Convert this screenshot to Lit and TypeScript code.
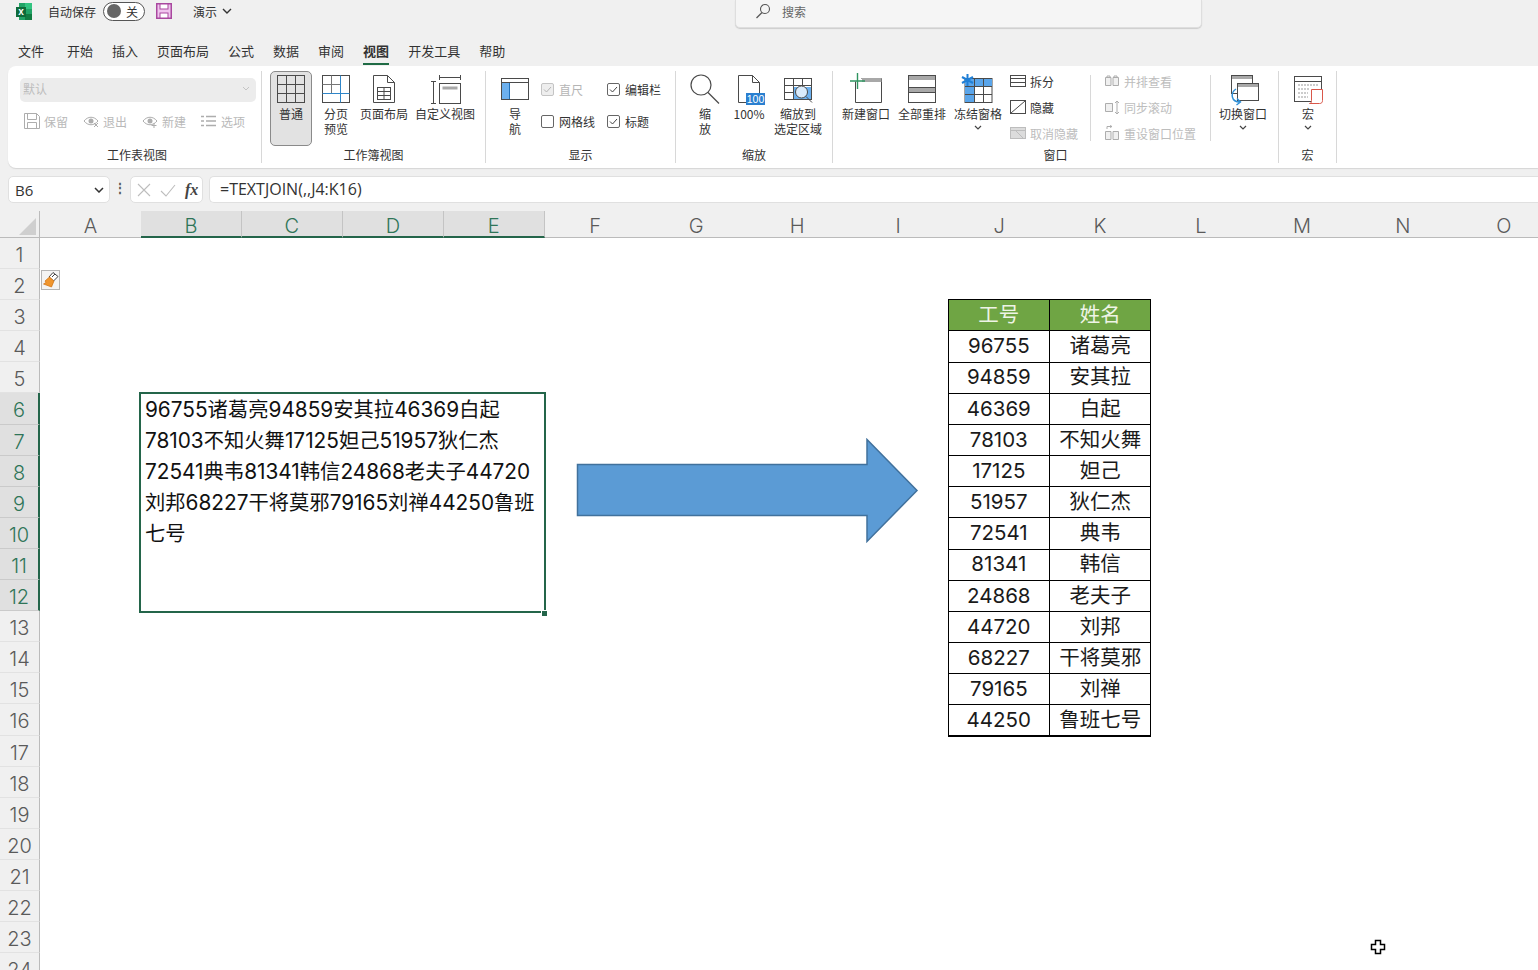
import { LitElement, html, css, svg } from "lit";
import { customElement } from "lit/decorators.js";

const S = "#4a4a4a";
const D = "#adadad";
const icons: Record<string, any> = {
  normal: svg`<g fill="none" stroke="${S}"><rect x="1.5" y="4.5" width="27" height="27"/><path d="M10.5 4.5v27M19.5 4.5v27M1.5 13.5h27M1.5 22.5h27"/></g>`,
  pagebreak: svg`<g fill="none"><rect x="1.5" y="4.5" width="27" height="27" stroke="${S}"/><path d="M10.5 4.5v18M1.5 13.5h18" stroke="#777"/><path d="M19.5 4.5v27M1.5 22.5h27" stroke="#2f86c9"/></g>`,
  pagelayout: svg`<g fill="none" stroke="${S}"><path d="M4.5 4.5h14l7 7v20h-21z"/><path d="M18.5 4.5v7h7"/><rect x="8.5" y="16.5" width="13" height="12"/><path d="M8.5 20.5h13M8.5 24.5h13M15 16.5v12"/></g>`,
  custom: svg`<g fill="none" stroke="${S}"><path d="M9.5 6.5h21M9.5 4v5M30.5 4v5M3.5 10.5v22M1 10.5h5M1 32.5h5"/><rect x="9.5" y="12.5" width="21" height="20"/><rect x="12.5" y="15.5" width="15" height="3" fill="#a8a8a8" stroke="none"/></g>`,
  nav: svg`<rect x="1.5" y="7.5" width="27" height="21" fill="#fff" stroke="${S}"/><rect x="2" y="12" width="7.5" height="16" fill="#6cb0ee"/><path d="M9.5 12v16" stroke="#1f6fb8"/><path d="M1.5 11.5h27" stroke="${S}"/>`,
  mag: svg`<circle cx="11" cy="14" r="10" fill="none" stroke="${S}" stroke-width="1.2"/><path d="M18 21.5l11 11" stroke="${S}" stroke-width="1.2"/>`,
  hundred: svg`<path d="M4.5 4.5h14l7 7v20h-21z M18.5 4.5v7h7" fill="none" stroke="${S}"/><rect x="12" y="22" width="19" height="12" fill="#2a7fd0"/><text x="21.5" y="32" text-anchor="middle" font-size="10.5" fill="#fff" font-family="Liberation Sans">100</text>`,
  zoomsel: svg`<g fill="none" stroke="${S}"><rect x="1.5" y="7.5" width="27" height="21" fill="#fff"/><rect x="10" y="16" width="18" height="12" fill="#6cb0ee" stroke="none"/><path d="M10.5 7.5v21M19.5 7.5v8M1.5 14.5h27M1.5 21.5h9"/><circle cx="18.5" cy="21" r="6" fill="#fff" fill-opacity=".75"/><path d="M23 25.5l6 6"/></g>`,
  newwin: svg`<g fill="none"><path d="M4.5 10.5v21h26v-24h-20" stroke="${S}"/><rect x="11" y="7" width="19.5" height="4" fill="#a8a8a8"/><path d="M6.5 2v16M-1 10h15" stroke="#2f9460" stroke-width="1.4"/></g>`,
  arrange: svg`<rect x="1.5" y="4.5" width="27" height="27" fill="none" stroke="${S}"/><rect x="2" y="5" width="26" height="4" fill="#a8a8a8"/><rect x="2" y="17" width="26" height="4" fill="#a8a8a8"/><path d="M1.5 16.5h27M1.5 21.5h27" stroke="${S}"/>`,
  freeze: svg`<rect x="2" y="7.5" width="27" height="24" fill="none" stroke="${S}"/><rect x="2" y="8" width="27" height="7" fill="#5aa5ea"/><rect x="2" y="15" width="9" height="16" fill="#5aa5ea"/><path d="M11.5 7.5v24M20.5 7.5v24M2 15.5h27M2 23.5h27" stroke="${S}"/><path d="M4.500 3v12M-1 6l11 6M-1 12l11-6" stroke="#1f7fd6" stroke-width="2"/>`,
  switch: svg`<g fill="none"><rect x="3.5" y="4.5" width="21" height="18" stroke="${S}" fill="#fff"/><rect x="4" y="5" width="20" height="3" fill="#a8a8a8"/><rect x="9.5" y="12.5" width="21" height="17" stroke="${S}" fill="#fff"/><rect x="10" y="13" width="20" height="3" fill="#a8a8a8"/><path d="M8 18c-6 4-5 13 4 13M9 27.500l3.500 3.500-4 3" stroke="#2f8fd6" stroke-width="1.4"/></g>`,
  macro: svg`<g fill="none"><rect x="1.500" y="5.500" width="27" height="25" stroke="${S}"/><path d="M1.500 10.500h27" stroke="${S}"/><path d="M5 14h20M5 18h12M5 22h10M5 26h10" stroke="#999" stroke-dasharray="2 1"/><path d="M18.500 18.500h11v11c0 2-1 3-3 3h-10c2 0 2-2 2-3z" fill="#fff" stroke="#d9574a"/></g>`,
};
const small: Record<string, any> = {
  save: svg`<path d="M.5.500h12l3 3v12H.5zM3.500.500v6h9v-6M3.500 15.500v-6h9v6" fill="none" stroke="${D}"/>`,
  eyex: svg`<path d="M1 8c4-5 10-5 14 0-4 5-10 5-14 0z" fill="none" stroke="${D}"/><circle cx="8" cy="8" r="2.500" fill="${D}"/><path d="M11 10l4 4M15 10l-4 4" stroke="${D}"/>`,
  eyep: svg`<path d="M1 8c4-5 10-5 14 0-4 5-10 5-14 0z" fill="none" stroke="${D}"/><circle cx="8" cy="8" r="2.500" fill="${D}"/><path d="M12 10v5M9.500 12.500h5" stroke="${D}"/>`,
  list: svg`<path d="M0 3.500h3M0 8h3M0 12.500h3M5 3.500h10M5 8h10M5 12.500h10" stroke="${D}" stroke-width="1.300" fill="none"/>`,
  split: svg`<rect x=".5" y="2.500" width="15" height="11" fill="none" stroke="${S}"/><path d="M.5 5.500h15M.5 9.500h15" stroke="${S}"/>`,
  hide: svg`<rect x=".5" y="1.500" width="15" height="13" fill="none" stroke="${S}"/><path d="M1 14L15 2" stroke="${S}"/>`,
  unhide: svg`<rect x=".5" y="2.500" width="15" height="11" fill="#dcdcdc" stroke="#bdbdbd"/><path d="M.5 5.500h15M6 6l7 7" stroke="#bdbdbd"/>`,
  side: svg`<path d="M1.500 4.500h5.500v8h-5.500zM9 4.500h5.500v8H9z" fill="#f0f0f0" stroke="${D}"/><path d="M3 4.500V3h3v1.500M10 4.500V3h3v1.500" stroke="${D}" fill="none"/>`,
  sync: svg`<path d="M1.500 4.500h7v8h-7zM8.500 4.500v8" fill="#f0f0f0" stroke="${D}"/><path d="M13 2v13M11 4l2-2 2 2M11 13l2 2 2-2" fill="none" stroke="${D}"/>`,
  reset: svg`<path d="M1.500 6.500h5.500v8h-5.500zM9 6.500h5.500v8H9z" fill="#f0f0f0" stroke="${D}"/><path d="M3 4V1.500h5M6 .5l2 1-2 1" stroke="${D}" fill="none"/>`,
};

const cols = "ABCDEFGHIJKLMNO".split("");
const rows = Array.from({ length: 24 }, (_, i) => i + 1);
const people = [
  ["96755", "诸葛亮"], ["94859", "安其拉"], ["46369", "白起"], ["78103", "不知火舞"], ["17125", "妲己"],
  ["51957", "狄仁杰"], ["72541", "典韦"], ["81341", "韩信"], ["24868", "老夫子"], ["44720", "刘邦"],
  ["68227", "干将莫邪"], ["79165", "刘禅"], ["44250", "鲁班七号"],
];
const chev = html`<svg class="chev" width="8" height="6" viewBox="0 0 8 6"><path d="M1 1l3 3 3-3" fill="none" stroke="#444" stroke-width="1.200"/></svg>`;

@customElement("app-root")
export class AppRoot extends LitElement {
  static styles = css`
    :host { display: block; width: 1538px; height: 970px; overflow: hidden; position: relative; background: #f0f0f0;
      font-family: "Noto Sans CJK SC", "Noto Sans", sans-serif; color: #333; font-size: 12px; }
    .title { height: 22px; display: flex; align-items: center; position: relative; }
    .logo { margin-left: 16px; }
    .autosave { margin-left: 16px; width: 48px; white-space: nowrap; }
    .toggle { margin-left: 7px; width: 42px; height: 19px; box-sizing: border-box; border: 1px solid #555; border-radius: 10px; background: #fff;
      display: flex; align-items: center; gap: 5px; padding-left: 3px; }
    .knob { width: 14px; height: 14px; border-radius: 50%; background: #666; }
    .savei { margin-left: 11px; }
    .doc { margin-left: 21px; display: flex; align-items: center; gap: 5px; }
    .search { position: absolute; left: 735px; top: 0; width: 467px; height: 28px; box-sizing: border-box; background: #f5f5f5; border: 1px solid #dedede; border-top: none;
      border-radius: 0 0 5px 5px; box-shadow: 0 1px 1px #ccc; display: flex; align-items: center; gap: 11px; padding: 0 0 5px 19px; color: #666; }
    .tabs { margin-top: 19px; height: 25px; display: flex; gap: 19px; padding-left: 18px; font-size: 13px; line-height: 20px; }
    .tab { height: 22px; }
    .tab:first-child { margin-right: 4px; }
    .tab.on { font-weight: 700; border-bottom: 2px solid #1f6b45; }
    .ribbon { margin-left: 8px; height: 102px; background: #fff; border-radius: 8px 0 0 8px; box-shadow: 0 1px 1px #d5d5d5; display: flex; align-items: flex-start; }
    .group { margin-top: 5px; height: 92px; box-sizing: border-box; border-right: 1px solid #d8d8d8; display: flex; flex-direction: column; flex: none; }
    .body { height: 75px; display: flex; }
    .glabel { height: 17px; line-height: 17px; text-align: center; white-space: nowrap; }
    .g1 { width: 254px; } .g1 .glabel { padding-left: 5px; }
    .g2 { width: 224px; } .g3 { width: 190px; } .g4 { width: 157px; } .g5 { width: 446px; } .g6 { width: 58px; }
    .big { box-sizing: border-box; height: 75px; display: flex; flex-direction: column; align-items: center; line-height: 15px; text-align: center; flex: none; }
    .big svg.ic { height: 34px; width: 30px; margin-bottom: 1px; flex: none; overflow: visible; }
    .big .t { white-space: nowrap; }
    .big.sel { background: #e2e2e2; border: 1px solid #8a8a8a; border-radius: 5px; }
    .big.sel svg.ic { margin-top: -1px; }
    .w38 { width: 38px; } .w36 { width: 36px; } .w42 { width: 42px; } .w46 { width: 46px; } .w48 { width: 48px; } .w62 { width: 62px; } .w32 { width: 32px; } .w40 { width: 40px; }
    .chev { margin-top: 4px; }
    .col1 { flex-direction: column; padding-left: 12px; }
    .dd { margin-top: 7px; width: 236px; height: 24px; border-radius: 5px; background: #ececec; color: #bdbdbd; display: flex; align-items: center; justify-content: space-between; padding: 0 6px 3px 3px; box-sizing: border-box; }
    .sv { margin: 11px 0 0 4px; display: flex; gap: 15px; color: #b9b9b9; }
    .si { display: flex; align-items: center; gap: 4px; height: 16px; white-space: nowrap; }
    .si svg { flex: none; }
    .g2 .body { padding-left: 8px; gap: 6px; }
    .g3 .body { padding-left: 13px; }
    .checks { margin-left: 10px; padding-top: 10px; display: grid; grid-template-columns: 66px 60px; grid-auto-rows: 16px; row-gap: 16px; }
    .ck { display: flex; align-items: center; gap: 5px; white-space: nowrap; }
    .box { width: 13px; height: 13px; box-sizing: border-box; border: 1px solid #666; border-radius: 2px; background: #fff; display: flex; flex: none; }
    .ck.off { color: #b5b5b5; }
    .ck.off .box { border-color: #c4c4c4; background: #eee; }
    .g4 .body { padding-left: 10px; gap: 2px; }
    .g5 .body { padding-left: 9px; }
    .g5 .big + .big { margin-left: 8px; }
    .colS { display: flex; flex-direction: column; gap: 6px; flex: none; }
    .colS .si { height: 20px; }
    .colS .dis { color: #bdbdbd; }
    .a { margin-left: 8px; width: 80px; }
    .b { width: 106px; margin-left: 13px; }
    .sep { width: 1px; height: 66px; margin-top: 4px; background: #d8d8d8; flex: none; }
    .g5 .sw { margin-left: 8px; }
    .g6 .body { padding-left: 9px; }
    .fx { margin-top: 8px; height: 27px; display: flex; align-items: stretch; font-family: "Open Sans", "Noto Sans", sans-serif; font-size: 16px; }
    .name { margin-left: 8px; width: 102px; box-sizing: border-box; background: #fff; border: 1px solid #e0e0e0; border-radius: 5px; display: flex; align-items: center; justify-content: space-between; padding: 0 5px 0 6px; font-size: 15px; }
    .dots { width: 20px; text-align: center; line-height: 24px; font-weight: 700; color: #555; font-size: 12px; }
    .btns { width: 73px; box-sizing: border-box; background: #fff; border: 1px solid #e0e0e0; border-radius: 5px; display: flex; align-items: center; padding-left: 5px; gap: 8px; }
    .fxi { font-family: "Liberation Serif", serif; font-style: italic; font-weight: 700; font-size: 16px; color: #444; margin-left: 1px; }
    .input { margin-left: 6px; flex: 1; box-sizing: border-box; background: #fff; border: 1px solid #e0e0e0; border-right: none; border-radius: 5px 0 0 5px; padding-left: 10px; line-height: 24px; color: #333; white-space: nowrap; }
    .sheet { margin-top: 8px; display: grid; grid-template-columns: 40px repeat(15, 100.96px); grid-template-rows: 27px repeat(24, 31.1px); background: #fff;
      font-family: "Inter", "Noto Sans CJK SC", sans-serif; position: relative; }
    .corner { background: #f0f0f0; grid-column: 1; grid-row: 1; border-right: 1px solid #bbb; border-bottom: 1px solid #bbb; box-sizing: border-box; display: flex; align-items: flex-end; justify-content: flex-end; padding: 0 3px 2px 0; }
    .ch { grid-row: 1; background: #f0f0f0; border-bottom: 1px solid #bbb; box-sizing: border-box; text-align: center; font-size: 20px; line-height: 30px; color: #5a5a5a; font-weight: 300; }
    .ch.on { background: #e0e0e0; color: #2f7558; border-bottom: 2px solid #24654a; border-right: 1px solid #c4c4c4; }
    .rh { grid-column: 1; background: #f0f0f0; border-right: 1px solid #bbb; border-bottom: 1px solid #e2e2e2; box-sizing: border-box; text-align: center; font-size: 20px; line-height: 34px; color: #5a5a5a; font-weight: 300; overflow: hidden; }
    .rh.on { background: #e0e0e0; color: #2f7558; border-right: 2px solid #24654a; border-bottom: 1px solid #cacaca; }
    .merged { grid-column: 3 / span 4; grid-row: 7 / span 7; box-sizing: border-box; border: 2px solid #24654a; padding: 0 3px 0 4px; margin: -1px -1px -2px -2px; font-size: 20.8px; line-height: 31px; color: #111; position: relative; z-index: 1; overflow: hidden; }
    .merged .c { font-size: 20.3px; }
    .handle { position: absolute; left: 541px; top: 399px; width: 5px; height: 5px; background: #24654a; border: 1px solid #fff; z-index: 2; }
    .tbl { grid-column: 11 / span 2; grid-row: 4 / span 14; margin: -1px -1px -1px -1px; display: grid; grid-template-columns: 1fr 1fr; grid-auto-rows: 1fr; gap: 1px; padding: 1px; background: #000; font-size: 20.5px; }
    .cell { background: #fff; color: #1a1a1a; display: flex; align-items: center; justify-content: center; line-height: 1; }
    .cell.h { background: #6fa544; color: #eef4e6; }
    .paste { grid-column: 2; grid-row: 3; width: 19px; height: 20px; box-sizing: border-box; border: 1px solid #b5b5b5; background: #f4f4f4; margin: 1px 0 0 1px; }
    .arrow { position: absolute; left: 576px; top: 227px; }
    .cursor { position: absolute; left: 1370px; top: 939px; }
  `;

  big(label: string[], icon: string, w: string, extra = "", chevron = false) {
    return html`<div class="big ${w} ${extra}"><svg class="ic" viewBox="0 0 30 34">${icons[icon]}</svg>${label.map((t) => html`<div class="t">${t}</div>`)}${chevron ? chev : ""}</div>`;
  }
  si(icon: string, text: string, dis = false) {
    return html`<div class="si ${dis ? "dis" : ""}"><svg width="16" height="16" viewBox="0 0 16 16">${small[icon]}</svg><span>${text}</span></div>`;
  }
  ck(text: string, on: boolean, off = false) {
    return html`<div class="ck ${off ? "off" : ""}"><span class="box">${on ? html`<svg width="11" height="11" viewBox="0 0 11 11"><path d="M2 5.500l2.500 2.500L9 3" fill="none" stroke="${off ? "#b5b5b5" : "#444"}"/></svg>` : ""}</span><span>${text}</span></div>`;
  }

  render() {
    return html`
      <div class="title">
        <svg class="logo" width="16" height="17" viewBox="0 0 16 17"><rect x="3" y="0" width="13" height="17" fill="#21a366"/><rect x="9" y="0" width="7" height="6" fill="#33c481"/><rect x="9" y="11" width="7" height="6" fill="#107c41"/><rect x="0" y="4" width="10" height="10" fill="#0e6b3a"/><text x="5" y="12" text-anchor="middle" font-size="10" font-weight="700" fill="#fff" font-family="Liberation Sans">x</text></svg>
        <span class="autosave">自动保存</span>
        <div class="toggle"><span class="knob"></span><span>关</span></div>
        <svg class="savei" width="16" height="16" viewBox="0 0 16 16"><rect x=".75" y=".75" width="14.500" height="14.500" fill="#f0c4ee" stroke="#a9489f" stroke-width="1.500"/><rect x="4" y="1" width="8" height="5" fill="#fff" stroke="#a9489f"/><rect x="4" y="10" width="8" height="5" fill="#fff" stroke="#a9489f"/></svg>
        <div class="doc"><span>演示</span><svg width="10" height="6" viewBox="0 0 10 6"><path d="M1 1l4 4 4-4" fill="none" stroke="#333" stroke-width="1.400"/></svg></div>
        <div class="search"><svg width="16" height="16" viewBox="0 0 16 16"><circle cx="10" cy="6" r="4.500" fill="none" stroke="#555" stroke-width="1.100"/><path d="M7 9.500L1.500 15" stroke="#555" stroke-width="1.300"/></svg><span>搜索</span></div>
      </div>
      <div class="tabs">
        ${["文件", "开始", "插入", "页面布局", "公式", "数据", "审阅", "视图", "开发工具", "帮助"].map((t) => html`<div class="tab ${t === "视图" ? "on" : ""}">${t}</div>`)}
      </div>
      <div class="ribbon">
        <div class="group g1">
          <div class="body col1">
            <div class="dd"><span>默认</span><svg width="8" height="6" viewBox="0 0 8 6"><path d="M1 1l3 3 3-3" fill="none" stroke="#c4c4c4"/></svg></div>
            <div class="sv">${this.si("save", "保留")}${this.si("eyex", "退出")}${this.si("eyep", "新建")}${this.si("list", "选项")}</div>
          </div>
          <div class="glabel">工作表视图</div>
        </div>
        <div class="group g2">
          <div class="body">
            ${this.big(["普通"], "normal", "w42", "sel")}
            ${this.big(["分页", "预览"], "pagebreak", "w36")}
            ${this.big(["页面布局"], "pagelayout", "w48")}
            ${this.big(["自定义视图"], "custom", "w62")}
          </div>
          <div class="glabel">工作簿视图</div>
        </div>
        <div class="group g3">
          <div class="body">
            ${this.big(["导", "航"], "nav", "w32")}
            <div class="checks">
              ${this.ck("直尺", true, true)}${this.ck("编辑栏", true)}
              ${this.ck("网格线", false)}${this.ck("标题", true)}
            </div>
          </div>
          <div class="glabel">显示</div>
        </div>
        <div class="group g4">
          <div class="body">
            ${this.big(["缩", "放"], "mag", "w38")}
            ${this.big(["100%"], "hundred", "w46")}
            ${this.big(["缩放到", "选定区域"], "zoomsel", "w48")}
          </div>
          <div class="glabel">缩放</div>
        </div>
        <div class="group g5">
          <div class="body">
            ${this.big(["新建窗口"], "newwin", "w48")}
            ${this.big(["全部重排"], "arrange", "w48")}
            ${this.big(["冻结窗格"], "freeze", "w48", "", true)}
            <div class="colS a">${this.si("split", "拆分")}${this.si("hide", "隐藏")}${this.si("unhide", "取消隐藏", true)}</div>
            <div class="sep"></div>
            <div class="colS b">${this.si("side", "并排查看", true)}${this.si("sync", "同步滚动", true)}${this.si("reset", "重设窗口位置", true)}</div>
            <div class="sep"></div>
            ${this.big(["切换窗口"], "switch", "w48", "sw", true)}
          </div>
          <div class="glabel">窗口</div>
        </div>
        <div class="group g6">
          <div class="body">${this.big(["宏"], "macro", "w40", "", true)}</div>
          <div class="glabel">宏</div>
        </div>
      </div>
      <div class="fx">
        <div class="name"><span>B6</span><svg width="10" height="6" viewBox="0 0 10 6"><path d="M1 1l4 4 4-4" fill="none" stroke="#333" stroke-width="1.500"/></svg></div>
        <div class="dots">⋮</div>
        <div class="btns">
          <svg width="16" height="16" viewBox="0 0 16 16"><path d="M2 2l12 12M14 2L2 14" stroke="#bdbdbd" stroke-width="1.100"/></svg>
          <svg width="16" height="16" viewBox="0 0 16 16"><path d="M1 9l5 5L15 3" fill="none" stroke="#bdbdbd" stroke-width="1.100"/></svg>
          <span class="fxi">fx</span>
        </div>
        <div class="input">=TEXTJOIN(,,J4:K16)</div>
      </div>
      <div class="sheet">
        <div class="corner"><svg width="17" height="17" viewBox="0 0 17 17"><path d="M17 0v17H0z" fill="#cfcfcf"/></svg></div>
        ${cols.map((c) => html`<div class="ch ${"BCDE".includes(c) ? "on" : ""}">${c}</div>`)}
        ${rows.map((r) => html`<div class="rh ${r >= 6 && r <= 12 ? "on" : ""}">${r}</div>`)}
        <div class="paste"><svg width="17" height="18" viewBox="0 0 17 18"><path d="M11 1.500l5 4-4.500 4.500-4.500-4z" fill="#fff" stroke="#444"/><path d="M13 3l-3 3" stroke="#444"/><path d="M7.500 6l4.500 4-2.500 6-8-3 2.500-1.500-1-1.500z" fill="#f0962e" stroke="#cf7010" stroke-width=".7"/></svg></div>
        <div class="merged">${people.map((p) => html`<span>${p[0]}</span>${p[1].split("").map((ch) => html`<span class="c">${ch}</span>`)}`)}</div>
        <div class="handle"></div>
        <div class="tbl">
          <div class="cell h">工号</div><div class="cell h">姓名</div>
          ${people.map((p) => html`<div class="cell">${p[0]}</div><div class="cell">${p[1]}</div>`)}
        </div>
        <svg class="arrow" width="344" height="106" viewBox="0 0 344 106"><path d="M1.500 26.500h289.500V1.500L341 52.500 291 103.500V77.500H1.500z" fill="#5b9bd5" stroke="#41719c" stroke-width="1.500"/></svg>
      </div>
      <svg class="cursor" width="16" height="16" viewBox="0 0 16 16"><path d="M5.500 1.500h5v4h4v5h-4v4h-5v-4h-4v-5h4z" fill="#fff" stroke="#000" stroke-width="1.500"/></svg>
    `;
  }
}
